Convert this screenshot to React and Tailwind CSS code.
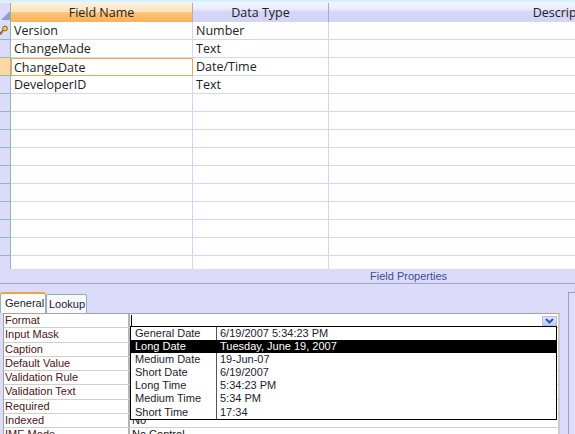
import React from 'react';

const fields = [
  { name: 'Version', type: 'Number', key: true },
  { name: 'ChangeMade', type: 'Text' },
  { name: 'ChangeDate', type: 'Date/Time', current: true },
  { name: 'DeveloperID', type: 'Text' },
];

const props = [
  ['Format', ''],
  ['Input Mask', ''],
  ['Caption', ''],
  ['Default Value', ''],
  ['Validation Rule', ''],
  ['Validation Text', ''],
  ['Required', 'No'],
  ['Indexed', 'No'],
  ['IME Mode', 'No Control'],
  ['IME Sentence Mode', 'None'],
  ['Smart Tags', ''],
];

const formats = [
  ['General Date', '6/19/2007 5:34:23 PM'],
  ['Long Date', 'Tuesday, June 19, 2007'],
  ['Medium Date', '19-Jun-07'],
  ['Short Date', '6/19/2007'],
  ['Long Time', '5:34:23 PM'],
  ['Medium Time', '5:34 PM'],
  ['Short Time', '17:34'],
];

function KeyIcon() {
  return (
    <svg width="11" height="11" viewBox="0 0 11 11" className="-ml-[2px]">
      <circle cx="7" cy="3.5" r="2.4" fill="#f2c95a" stroke="#8a6418" strokeWidth="1" />
      <path d="M5.3 5.2 L1 9.5 M2.2 8.3 L3.4 9.5 M3.4 7.1 L4.4 8.1" stroke="#8a6418" strokeWidth="1.3" fill="none" />
    </svg>
  );
}

function GridRow({ f }) {
  return (
    <div className="flex h-[18px] shrink-0">
      <div
        className={`w-[11px] shrink-0 flex items-center overflow-hidden border-r border-b border-[#8cbcac] ${
          f && f.current ? 'bg-[#fcd8a6]' : 'bg-[#dcdcfa]'
        }`}
      >
        {f && f.key && <KeyIcon />}
      </div>
      <div
        className={`w-[182px] shrink-0 px-[3px] leading-[17px] ${
          f && f.current ? 'border border-[#f5a84a] pl-[2px] leading-[16px]' : 'border-b border-r border-[#d4d4f4]'
        }`}
      >
        {f ? f.name : ''}
      </div>
      <div className="w-[136px] shrink-0 px-[3px] leading-[17px] border-b border-r border-[#d4d4f4]">
        {f ? f.type : ''}
      </div>
      <div className="flex-1 border-b border-[#d4d4f4]" />
    </div>
  );
}

export default function App() {
  const rows = Array.from({ length: 14 }, (_, i) => fields[i]);

  return (
    <div className="relative w-[575px] h-[434px] overflow-hidden bg-[#dcdcfa] flex flex-col">
      {/* Table design grid */}
      <div className="bg-white font-['Open_Sans',sans-serif] text-[12.5px] text-[#222]">
        <div className="h-[3px] bg-[linear-gradient(#cfeefc,#e8f8fe)]" />
        <div className="flex h-[19px]">
          <div className="w-[11px] shrink-0 bg-[#dcdcfa] border-r border-[#8cbcac] flex items-end justify-end pb-[2px]">
            <svg width="9" height="9" viewBox="0 0 9 9">
              <polygon points="9,0 9,9 0,9" fill="#8f9fcb" />
            </svg>
          </div>
          <div className="w-[182px] shrink-0 text-center leading-[19px] border-r border-[#b8b0a0] bg-[linear-gradient(#fff0dc_0%,#fde2bc_45%,#fcc273_52%,#fab25a_100%)]">
            Field Name
          </div>
          <div className="w-[136px] shrink-0 text-center leading-[19px] border-r border-[#a8a8c0] bg-[linear-gradient(#f4f4ff_0%,#e8e8fc_35%,#d6d6f8_45%,#d4d4f8_100%)]">
            Data Type
          </div>
          <div className="w-[474px] shrink-0 text-center leading-[19px] bg-[linear-gradient(#f4f4ff_0%,#e8e8fc_35%,#d6d6f8_45%,#d4d4f8_100%)]">
            Description
          </div>
        </div>
        <div className="h-[247px] overflow-hidden flex flex-col">
          {rows.map((f, i) => (
            <GridRow key={i} f={f} />
          ))}
        </div>
      </div>

      {/* Field Properties caption */}
      <div className="h-[15px] shrink-0 border-b border-[#98a6c6] pl-[370px] font-['Liberation_Sans',Arial,sans-serif] text-[11px] leading-[14px] text-[#3c4c96]">
        Field Properties
      </div>

      {/* Lower pane */}
      <div className="flex flex-1 pt-[8px] font-['Liberation_Sans',Arial,sans-serif] text-[11px]">
        <div className="w-[560px] shrink-0 flex flex-col">
          <div className="flex items-end h-[21px]">
            <div className="w-[46px] h-[21px] bg-white rounded-t-[3px] border-t-2 border-x border-t-[#f3a145] border-x-[#9ab4b0] pl-[4px] leading-[18px] text-[#1a1a2a]">
              General
            </div>
            <div className="w-[41px] h-[19px] bg-[#f8f8ff] rounded-t-[2px] border border-b-0 border-[#8fb0aa] pl-[2px] leading-[18px] text-[#1a1a3a]">
              Lookup
            </div>
          </div>
          <div className="ml-[3px] w-[557px] bg-white border border-[#a4a4a4] border-r-[#d0ccc4] border-r-2">
            {props.map(([label, value], i) => (
              <div key={label} className="flex h-[14.3px] shrink-0 border-b border-[#cfcfcf]">
                <div className="w-[126px] shrink-0 pl-[1px] leading-[13px] text-[#4a1616] border-r-2 border-[#b4b4b4] whitespace-nowrap overflow-hidden">
                  {label}
                </div>
                {i === 0 ? (
                  <div className="flex-1 flex items-center justify-between pl-[1px] pr-[1px]">
                    <div className="w-[1px] h-[11px] bg-black" />
                    <div className="w-[15px] h-[10px] bg-[linear-gradient(#dfe6fc,#bccbf4)] border border-[#b0c0ea] flex items-center justify-center">
                      <svg width="9" height="6" viewBox="0 0 9 6">
                        <path d="M1 1 L4.5 4.5 L8 1" stroke="#2a4f9c" strokeWidth="1.8" fill="none" />
                      </svg>
                    </div>
                  </div>
                ) : (
                  <div className="flex-1 pl-[2px] leading-[13px] text-[#111]">{value}</div>
                )}
              </div>
            ))}
          </div>
        </div>
        <div className="ml-[8px] flex-1 border-l border-t border-[#8ea4b8] bg-[#dedcfa]" />
      </div>

      {/* Format dropdown list */}
      <div className="absolute left-[130px] top-[326px] w-[427px] h-[94px] overflow-hidden bg-white border border-black flex flex-col font-['Liberation_Sans',Arial,sans-serif] text-[11px] text-[#1c1c2c]">
        {formats.map(([name, sample], i) => (
          <div
            key={name}
            className={`flex shrink-0 h-[13.1px] leading-[13px] ${i === 1 ? 'bg-black text-white' : ''}`}
          >
            <div className={`w-[86px] shrink-0 pl-[4px] border-r ${i === 1 ? 'border-black' : 'border-[#555]'}`}>
              {name}
            </div>
            <div className="flex-1 pl-[3px]">{sample}</div>
          </div>
        ))}
      </div>
    </div>
  );
}
